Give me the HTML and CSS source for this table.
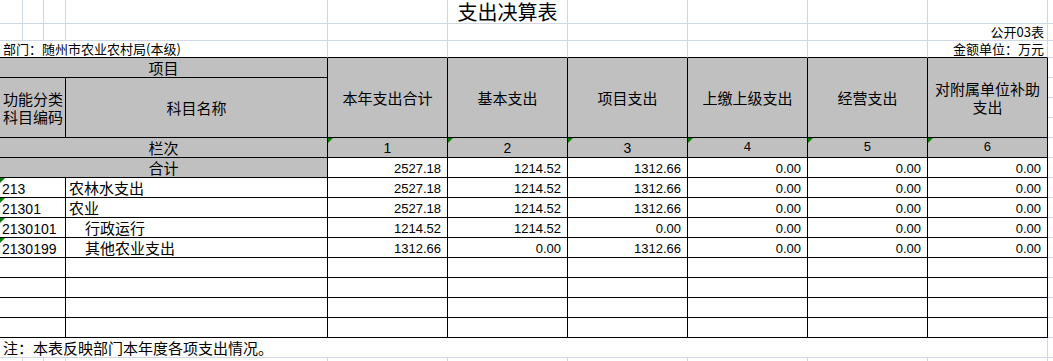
FILE: index.html
```html
<!DOCTYPE html>
<html lang="zh-CN">
<head>
<meta charset="utf-8">
<title>支出决算表</title>
<link rel="stylesheet" href="styles.css">
</head>
<body>
<table class="sheet">
  <colgroup>
    <col class="c23"><col class="c21"><col class="c22"><col class="c262">
    <col class="c120"><col class="c120"><col class="c120"><col class="c120"><col class="c120"><col class="c120">
    <col class="cg">
  </colgroup>
  <tr class="r24">
    <td></td><td></td><td></td><td></td><td></td>
    <td class="title">支出决算表</td>
    <td></td><td></td><td></td><td></td><td class="g"></td>
  </tr>
  <tr class="r17">
    <td></td><td></td><td></td><td></td><td></td><td></td><td></td><td></td><td></td>
    <td class="small right">公开03表</td><td class="g"></td>
  </tr>
  <tr class="r17">
    <td colspan="4" class="tb small">部门：随州市农业农村局(本级)</td>
    <td class="tb"></td><td class="tb"></td><td class="tb"></td><td class="tb"></td><td class="tb"></td>
    <td class="tb small right">金额单位：万元</td><td class="g"></td>
  </tr>
  <tr class="r20">
    <td colspan="4" class="k h">项目</td>
    <td rowspan="4" class="k h">本年支出合计</td>
    <td rowspan="4" class="k h">基本支出</td>
    <td rowspan="4" class="k h">项目支出</td>
    <td rowspan="4" class="k h">上缴上级支出</td>
    <td rowspan="4" class="k h">经营支出</td>
    <td rowspan="4" class="k h wrap"><span class="ln">对附属单位补助</span><span class="ln">支出</span></td>
    <td class="g"></td>
  </tr>
  <tr class="r20">
    <td colspan="3" rowspan="3" class="k h wrap"><span class="ln">功能分类</span><span class="ln">科目编码</span></td>
    <td rowspan="3" class="k h">科目名称</td>
    <td class="g"></td>
  </tr>
  <tr class="r20"><td class="g"></td></tr>
  <tr class="r20"><td class="g"></td></tr>
  <tr class="r20">
    <td colspan="4" class="k h">栏次</td>
    <td class="k h tri num-h">1</td>
    <td class="k h tri num-h">2</td>
    <td class="k h tri num-h">3</td>
    <td class="k h tri num-s">4</td>
    <td class="k h tri num-s">5</td>
    <td class="k h tri num-s">6</td>
    <td class="g"></td>
  </tr>
  <tr class="r20">
    <td colspan="4" class="k h">合计</td>
    <td class="k n">2527.18</td><td class="k n">1214.52</td><td class="k n">1312.66</td>
    <td class="k n">0.00</td><td class="k n">0.00</td><td class="k n">0.00</td>
    <td class="g"></td>
  </tr>
  <tr class="r20">
    <td colspan="3" class="k tri code">213</td><td class="k">农林水支出</td>
    <td class="k n">2527.18</td><td class="k n">1214.52</td><td class="k n">1312.66</td>
    <td class="k n">0.00</td><td class="k n">0.00</td><td class="k n">0.00</td>
    <td class="g"></td>
  </tr>
  <tr class="r20">
    <td colspan="3" class="k tri code">21301</td><td class="k">农业</td>
    <td class="k n">2527.18</td><td class="k n">1214.52</td><td class="k n">1312.66</td>
    <td class="k n">0.00</td><td class="k n">0.00</td><td class="k n">0.00</td>
    <td class="g"></td>
  </tr>
  <tr class="r20">
    <td colspan="3" class="k tri code">2130101</td><td class="k indent">行政运行</td>
    <td class="k n">1214.52</td><td class="k n">1214.52</td><td class="k n">0.00</td>
    <td class="k n">0.00</td><td class="k n">0.00</td><td class="k n">0.00</td>
    <td class="g"></td>
  </tr>
  <tr class="r20">
    <td colspan="3" class="k tri code">2130199</td><td class="k indent">其他农业支出</td>
    <td class="k n">1312.66</td><td class="k n">0.00</td><td class="k n">1312.66</td>
    <td class="k n">0.00</td><td class="k n">0.00</td><td class="k n">0.00</td>
    <td class="g"></td>
  </tr>
  <tr class="r20">
    <td colspan="3" class="k"></td><td class="k"></td>
    <td class="k"></td><td class="k"></td><td class="k"></td><td class="k"></td><td class="k"></td><td class="k"></td>
    <td class="g"></td>
  </tr>
  <tr class="r20">
    <td colspan="3" class="k"></td><td class="k"></td>
    <td class="k"></td><td class="k"></td><td class="k"></td><td class="k"></td><td class="k"></td><td class="k"></td>
    <td class="g"></td>
  </tr>
  <tr class="r20">
    <td colspan="3" class="k"></td><td class="k"></td>
    <td class="k"></td><td class="k"></td><td class="k"></td><td class="k"></td><td class="k"></td><td class="k"></td>
    <td class="g"></td>
  </tr>
  <tr class="r20">
    <td colspan="3" class="k"></td><td class="k"></td>
    <td class="k"></td><td class="k"></td><td class="k"></td><td class="k"></td><td class="k"></td><td class="k"></td>
    <td class="g"></td>
  </tr>
  <tr class="r20">
    <td colspan="10" class="note">注：本表反映部门本年度各项支出情况。</td>
    <td class="g"></td>
  </tr>
  <tr class="r20">
    <td></td><td></td><td></td><td></td><td></td><td></td><td></td><td></td><td></td><td></td><td class="g"></td>
  </tr>
</table>
</body>
</html>
```

FILE: styles.css
```css
html, body {
  margin: 0;
  padding: 0;
  background: #ffffff;
}

.sheet {
  table-layout: fixed;
  width: 1053px;
  border-collapse: separate;
  border-spacing: 0;
  font-family: "Noto Sans CJK SC", "Noto Sans", sans-serif;
  font-size: 15px;
  color: #000;
}

.c23 { width: 23px; }
.c21 { width: 21px; }
.c22 { width: 22px; }
.c262 { width: 262px; }
.c120 { width: 120px; }
.cg { width: 5px; }

.r24 { height: 24px; }
.r17 { height: 17px; }
.r20 { height: 20px; }

.sheet td {
  box-sizing: border-box;
  padding: 0 3px;
  border-right: 1px solid #d0d7e5;
  border-bottom: 1px solid #d0d7e5;
  white-space: nowrap;
  overflow: visible;
  line-height: 16px;
  vertical-align: middle;
  text-align: left;
}

.sheet td.g {
  border-right: none;
  padding: 0;
}

.sheet td.tb {
  border-bottom-color: #000;
}

.sheet td.k {
  border-right-color: #000;
  border-bottom-color: #000;
}

.h {
  background: #c0c0c0;
  text-align: center !important;
}

.ln {
  display: block;
  height: 18px;
  line-height: 18px;
}

.sheet td.title {
  font-size: 20px;
  text-align: center;
  line-height: 22px;
}

.small {
  font-size: 13px;
}

.sheet td.right {
  text-align: right;
}

.sheet td.n {
  text-align: right;
  font-family: "Liberation Sans", Arial, sans-serif;
  font-size: 13px;
  padding-right: 6px;
  padding-top: 2px;
}

.sheet td.code {
  font-family: "Liberation Sans", Arial, sans-serif;
  font-size: 14px;
  padding-left: 2px;
  padding-top: 2px;
}

.sheet td.indent {
  padding-left: 19px;
}

.num-h {
  font-family: "Liberation Sans", Arial, sans-serif;
  font-size: 14px;
}

.num-s {
  font-family: "Liberation Mono", monospace;
  font-size: 13px;
}

.tri {
  position: relative;
}

.tri::before {
  content: "";
  position: absolute;
  left: 0;
  top: 0;
  border-top: 5px solid #008000;
  border-right: 5px solid transparent;
}

.note {
  font-size: 15px;
}
```
